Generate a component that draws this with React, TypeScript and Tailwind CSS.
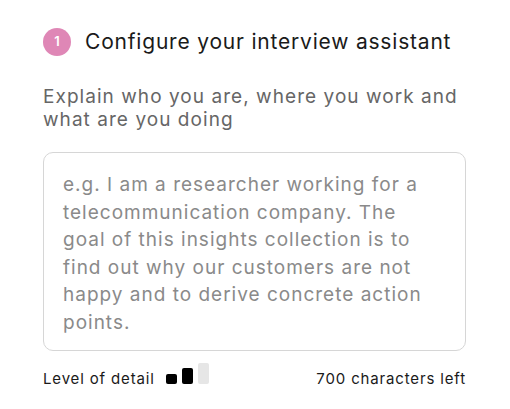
import { useState } from 'react'

const placeholder = [
  'e.g. I am a researcher working for a',
  'telecommunication company. The',
  'goal of this insights collection is to',
  'find out why our customers are not',
  'happy and to derive concrete action',
  'points.',
].join('\n')

function DetailBars() {
  return (
    <div className="flex items-end gap-[5px] mb-[5px]">
      <div className="w-[11px] h-[10px] rounded-[2px] bg-black" />
      <div className="w-[11px] h-[16px] rounded-[2px] bg-black" />
      <div className="w-[11px] h-[21px] rounded-[2px] bg-[#e6e6e6]" />
    </div>
  )
}

export default function App() {
  const [text, setText] = useState('')
  const maxChars = 700

  return (
    <div className="bg-white min-h-[409px] px-[43px] pt-[28px] font-['Inter',sans-serif]">
      <div className="flex items-center gap-[14px]">
        <div className="w-[28px] h-[28px] rounded-full bg-[#df87b6] flex items-center justify-center text-white text-[13px] font-semibold">
          1
        </div>
        <h1 className="text-[21px] leading-[28px] tracking-[0.8px] text-[#1a1a1a]">
          Configure your interview assistant
        </h1>
      </div>

      <p className="mt-[29px] w-[430px] text-[19px] leading-[23px] tracking-[1.05px] text-[#666666]">
        Explain who you are, where you work and what are you doing
      </p>

      <textarea
        value={text}
        onChange={e => setText(e.target.value.slice(0, maxChars))}
        placeholder={placeholder}
        className="mt-[21px] block w-[423px] h-[199px] resize-none rounded-[10px] border border-[#d6d6d6] px-[19px] pt-[18px] text-[19px] leading-[27.5px] tracking-[1px] text-[#333] placeholder:text-[#8a8a8a] outline-none"
      />

      <div className="mt-[12px] flex items-end justify-between w-[423px]">
        <div className="flex items-end gap-[11px]">
          <span className="text-[15px] leading-[20px] tracking-[0.85px] text-[#1a1a1a]">Level of detail</span>
          <DetailBars />
        </div>
        <span className="text-[15px] leading-[20px] tracking-[0.85px] text-[#1a1a1a]">
          {maxChars - text.length} characters left
        </span>
      </div>
    </div>
  )
}
